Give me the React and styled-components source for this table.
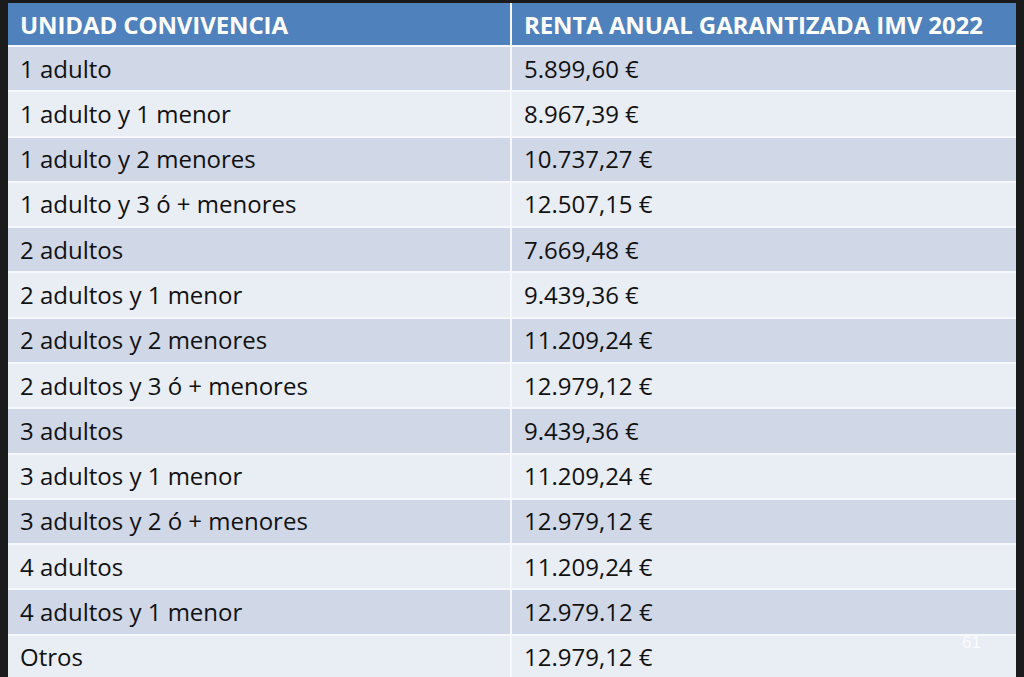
import React from "react"
import styled, { createGlobalStyle } from "styled-components"

const rows = [
  ["1 adulto", "5.899,60 €"],
  ["1 adulto y 1 menor", "8.967,39 €"],
  ["1 adulto y 2 menores", "10.737,27 €"],
  ["1 adulto y 3 ó + menores", "12.507,15 €"],
  ["2 adultos", "7.669,48 €"],
  ["2 adultos y 1 menor", "9.439,36 €"],
  ["2 adultos y 2 menores", "11.209,24 €"],
  ["2 adultos y 3 ó + menores", "12.979,12 €"],
  ["3 adultos", "9.439,36 €"],
  ["3 adultos y 1 menor", "11.209,24 €"],
  ["3 adultos y 2 ó + menores", "12.979,12 €"],
  ["4 adultos", "11.209,24 €"],
  ["4 adultos y 1 menor", "12.979.12 €"],
  ["Otros", "12.979,12 €"],
]

const GlobalStyle = createGlobalStyle`
  html, body {
    margin: 0;
    padding: 0;
    background: #1b1b1b;
    overflow: hidden;
  }
  body {
    font-family: "Open Sans", "Liberation Sans", sans-serif;
  }
`

const Slide = styled.div`
  position: relative;
  width: 1024px;
  height: 677px;
  padding: 3px 8px 0 8px;
  box-sizing: border-box;
`

// header row + 14 data rows, white hairlines between cells
const Table = styled.div`
  display: grid;
  grid-template-columns: 502px 504px;
  grid-template-rows: 42px repeat(14, 1fr);
  height: 676px;
  column-gap: 2px;
  row-gap: 2px;
  background: #f6f8fb;
`

const Cell = styled.div`
  display: flex;
  align-items: center;
  padding: 0 12px 1px;
  font-size: 24px;
  color: #111111;
  background: ${(p) => (p.$odd ? "#d0d8e8" : "#e9edf4")};
  white-space: nowrap;
`

const HeadCell = styled(Cell)`
  background: #4f81bd;
  color: #ffffff;
  font-weight: 700;
  letter-spacing: -0.1px;
  padding-top: 1px;
`

const PageNum = styled.span`
  position: absolute;
  left: 962px;
  top: 633px;
  font-family: "Liberation Sans", sans-serif;
  font-size: 17px;
  color: #ffffff;
  opacity: 0.8;
`

export default function App() {
  return (
    <Slide>
      <GlobalStyle />
      <Table>
        <HeadCell>UNIDAD CONVIVENCIA</HeadCell>
        <HeadCell>RENTA ANUAL GARANTIZADA IMV 2022</HeadCell>
        {rows.map(([unit, amount], i) => (
          <React.Fragment key={unit}>
            <Cell $odd={i % 2 === 0}>{unit}</Cell>
            <Cell $odd={i % 2 === 0}>{amount}</Cell>
          </React.Fragment>
        ))}
      </Table>
      <PageNum>61</PageNum>
    </Slide>
  )
}
